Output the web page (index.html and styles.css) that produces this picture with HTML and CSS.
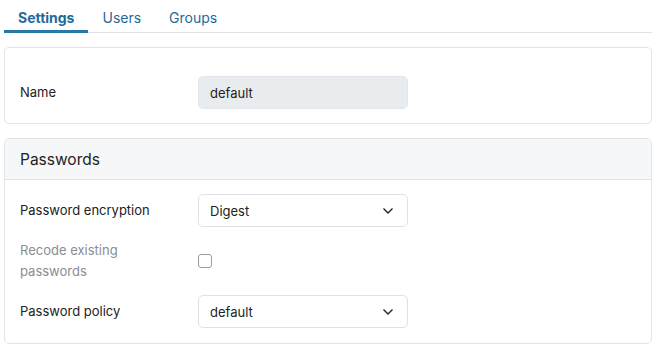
FILE: index.html
```html
<!DOCTYPE html>
<html lang="en">
<head>
  <meta charset="UTF-8" />
  <title>Settings</title>
  <link rel="stylesheet" href="styles.css">
</head>
<body>
  <nav class="tabs">
    <a class="tab active" href="#">Settings</a>
    <a class="tab" href="#">Users</a>
    <a class="tab" href="#">Groups</a>
  </nav>

  <section class="card">
    <div class="card-body">
      <div class="row">
        <label class="label">Name</label>
        <input class="field readonly" type="text" value="default" readonly>
      </div>
    </div>
  </section>

  <section class="card">
    <div class="card-header">Passwords</div>
    <div class="card-body list">
      <div class="row">
        <label class="label">Password encryption</label>
        <div class="field select">
          <span>Digest</span>
          <svg class="chev" width="12" height="8" viewBox="0 0 12 8"><path d="M1.5 1.5 L6 6 L10.5 1.5" fill="none" stroke="#222" stroke-width="1.4"/></svg>
        </div>
      </div>
      <div class="row">
        <label class="label muted">Recode existing<br>passwords</label>
        <span class="check"></span>
      </div>
      <div class="row">
        <label class="label">Password policy</label>
        <div class="field select">
          <span>default</span>
          <svg class="chev" width="12" height="8" viewBox="0 0 12 8"><path d="M1.5 1.5 L6 6 L10.5 1.5" fill="none" stroke="#222" stroke-width="1.4"/></svg>
        </div>
      </div>
    </div>
  </section>
</body>
</html>
```

FILE: styles.css
```css
* {
  margin: 0;
  padding: 0;
  box-sizing: border-box;
}

body {
  font-family: Inter, "Noto Sans", sans-serif;
  font-size: 13px;
  color: #222;
  background: #fff;
  padding: 0 7px 0 4px;
}

.tabs {
  display: flex;
  border-bottom: 1px solid #dfe1e6;
  height: 33px;
  margin-bottom: 14px;
}

.tab {
  text-decoration: none;
  font-size: 14px;
  color: #1f6a9a;
  padding: 9px 14px 0;
  border-bottom: 3px solid transparent;
  margin-bottom: -1px;
}

.tab.active {
  font-weight: bold;
  border-bottom-color: #2a78a8;
}

.card {
  border: 1px solid #e3e4e8;
  border-radius: 5px;
  margin-bottom: 14px;
  overflow: hidden;
}

.card-header {
  background: #f6f7f9;
  border-bottom: 1px solid #e3e4e8;
  height: 41px;
  padding: 0 15px;
  display: flex;
  align-items: center;
  font-size: 15.5px;
}

.card-body {
  padding: 28px 15px 14px;
}

.card-body.list {
  padding: 14px 15px 15px;
  display: flex;
  flex-direction: column;
  gap: 13px;
}

.row {
  display: flex;
  align-items: center;
}

.label {
  width: 178px;
  line-height: 21px;
}

.muted {
  color: #8a8d93;
}

.field {
  width: 210px;
  height: 33px;
  border-radius: 5px;
  font: inherit;
  color: inherit;
  padding: 0 11px;
  display: flex;
  align-items: center;
}

.readonly {
  background: #e9ecef;
  border: 1px solid #e2e5e9;
  outline: none;
}

.select {
  border: 1px solid #dfe1e6;
  justify-content: space-between;
}

.chev {
  margin-right: 2px;
}

.check {
  width: 14px;
  height: 14px;
  border: 1px solid #9a9ca1;
  border-radius: 3px;
}
```
